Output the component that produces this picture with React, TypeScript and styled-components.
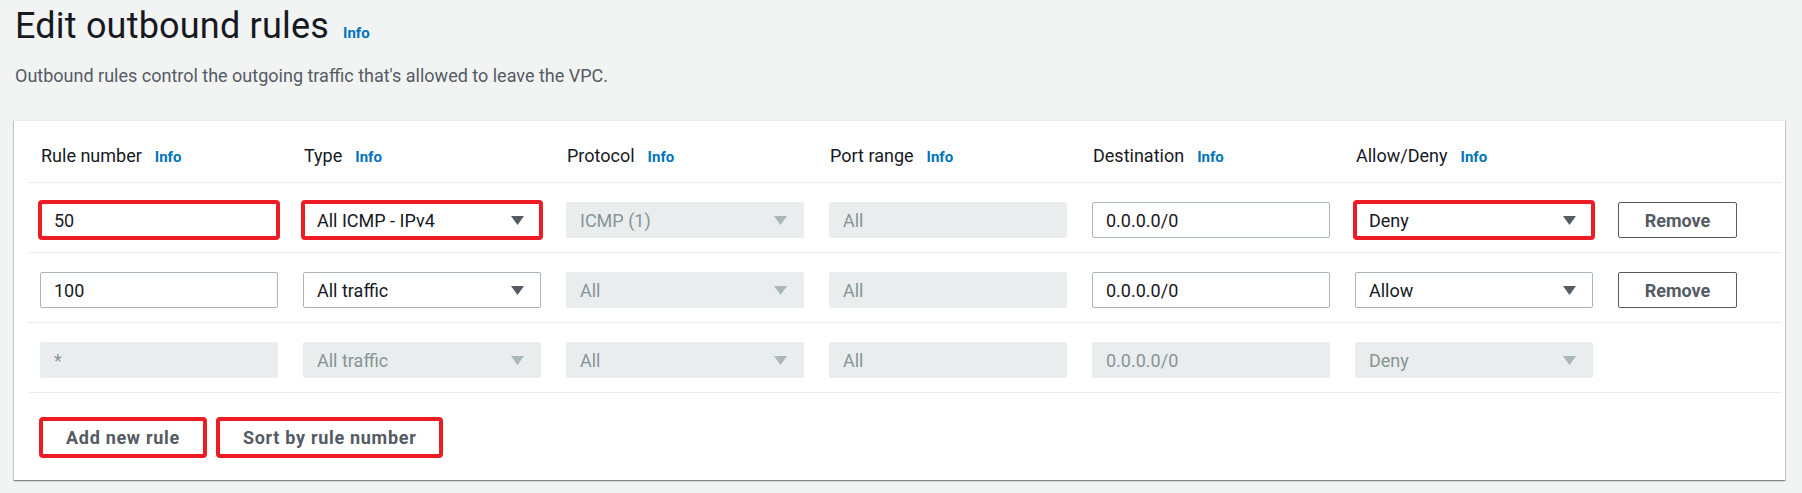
import styled, { createGlobalStyle } from "styled-components";

const GlobalStyle = createGlobalStyle`
  body {
    margin: 0;
    background: #f2f3f3;
    font-family: Roboto, "Noto Sans", sans-serif;
    color: #16191f;
  }
`

type Cell = {
  kind: "input" | "select";
  value: string;
  disabled?: boolean;
  marked?: boolean;
}

type Rule = {
  id: string;
  cells: Cell[];
  removable: boolean;
}

const columns = ["Rule number", "Type", "Protocol", "Port range", "Destination", "Allow/Deny"]

const rules: Rule[] = [
  {
    id: "50",
    removable: true,
    cells: [
      {kind: "input", value: "50", marked: true},
      {kind: "select", value: "All ICMP - IPv4", marked: true},
      {kind: "select", value: "ICMP (1)", disabled: true},
      {kind: "input", value: "All", disabled: true},
      {kind: "input", value: "0.0.0.0/0"},
      {kind: "select", value: "Deny", marked: true},
    ],
  },
  {
    id: "100",
    removable: true,
    cells: [
      {kind: "input", value: "100"},
      {kind: "select", value: "All traffic"},
      {kind: "select", value: "All", disabled: true},
      {kind: "input", value: "All", disabled: true},
      {kind: "input", value: "0.0.0.0/0"},
      {kind: "select", value: "Allow"},
    ],
  },
  {
    id: "*",
    removable: false,
    cells: [
      {kind: "input", value: "*", disabled: true},
      {kind: "select", value: "All traffic", disabled: true},
      {kind: "select", value: "All", disabled: true},
      {kind: "input", value: "All", disabled: true},
      {kind: "input", value: "0.0.0.0/0", disabled: true},
      {kind: "select", value: "Deny", disabled: true},
    ],
  },
]

const Caret = ({disabled}: { disabled?: boolean }) => (
  <svg width="13" height="9" viewBox="0 0 13 9">
    <path d="M0 0 H13 L6.5 9 Z" fill={disabled ? "#aab7b8" : "#545b64"}/>
  </svg>
)

export default function App() {
  return (
    <>
      <GlobalStyle/>
      <Page>
        <Header>
          <Title>Edit outbound rules</Title>
          <InfoLink href="#">Info</InfoLink>
        </Header>
        <Description>Outbound rules control the outgoing traffic that's allowed to leave the VPC.</Description>

        <Card>
          <HeadRow>
            {columns.map((c) => (
              <HeadCell key={c}>
                {c}
                <InfoLink href="#">Info</InfoLink>
              </HeadCell>
            ))}
          </HeadRow>

          {rules.map((rule) => (
            <Row key={rule.id}>
              {rule.cells.map((cell, i) => (
                <Field key={i} $disabled={cell.disabled} $marked={cell.marked}>
                  <span>{cell.value}</span>
                  {cell.kind === "select" && <Caret disabled={cell.disabled}/>}
                </Field>
              ))}
              {rule.removable && <RemoveButton>Remove</RemoveButton>}
            </Row>
          ))}

          <Footer>
            <FooterButton $marked>Add new rule</FooterButton>
            <FooterButton $marked>Sort by rule number</FooterButton>
          </Footer>
        </Card>
      </Page>
    </>
  );
}

const Page = styled.div`
  padding: 4px 17px 14px 14px;
`

const Header = styled.div`
  display: flex;
  align-items: baseline;
  gap: 14px;
  height: 44px;
  padding-left: 1px;
`

const Title = styled.h1`
  margin: 0;
  font-size: 36px;
  font-weight: 400;
  letter-spacing: 0.2px;
  line-height: 44px;
  color: #16191f;
`

const InfoLink = styled.a`
  color: #0073bb;
  font-size: 15px;
  font-weight: 700;
  text-decoration: none;
`

const Description = styled.p`
  margin: 16px 0 0 1px;
  font-size: 18px;
  line-height: 24px;
  color: #545b64;
`

const Card = styled.div`
  margin-top: 32px;
  padding: 0 3px 0 14px;
  background: #ffffff;
  border-top: 1px solid #eaeded;
  box-shadow: 0 1px 1px 0 rgba(0, 28, 36, 0.3),
  1px 1px 1px 0 rgba(0, 28, 36, 0.15),
  -1px 1px 1px 0 rgba(0, 28, 36, 0.15);
`

const Row = styled.div`
  display: grid;
  grid-template-columns: repeat(6, 238px) 119px;
  column-gap: 25px;
  align-items: center;
  padding: 19px 0 14px 12px;
  border-bottom: 1px solid #eaeded;
`

const HeadRow = styled(Row)`
  padding: 23px 0 13px 13px;
`

const HeadCell = styled.div`
  display: flex;
  align-items: baseline;
  gap: 13px;
  font-size: 18px;
  line-height: 24px;
  color: #16191f;
`

const Field = styled.div<{ $disabled?: boolean; $marked?: boolean }>`
  box-sizing: border-box;
  display: flex;
  align-items: center;
  justify-content: space-between;
  height: 36px;
  padding: 0 16px 0 13px;
  border: 1px solid ${({$disabled}) => ($disabled ? "#eaeded" : "#aab7b8")};
  border-radius: 2px;
  background: ${({$disabled}) => ($disabled ? "#eaeded" : "#ffffff")};
  color: ${({$disabled}) => ($disabled ? "#879596" : "#16191f")};
  font-size: 18px;
  outline: ${({$marked}) => ($marked ? "4px solid #ed1c24" : "none")};
  outline-offset: -2px;
`

const RemoveButton = styled.button`
  box-sizing: border-box;
  height: 36px;
  border: 1px solid #545b64;
  border-radius: 2px;
  background: #ffffff;
  color: #545b64;
  font-family: inherit;
  font-size: 18px;
  font-weight: 700;
`

const Footer = styled.div`
  display: flex;
  gap: 13px;
  padding: 26px 0 24px 13px;
`

const FooterButton = styled.button<{ $marked?: boolean }>`
  box-sizing: border-box;
  height: 37px;
  padding: 0 24px;
  border: 1px solid #545b64;
  border-radius: 2px;
  background: #ffffff;
  color: #545b64;
  font-family: inherit;
  font-size: 18px;
  font-weight: 700;
  letter-spacing: 0.7px;
  outline: ${({$marked}) => ($marked ? "4px solid #ed1c24" : "none")};
  outline-offset: -2px;
`
